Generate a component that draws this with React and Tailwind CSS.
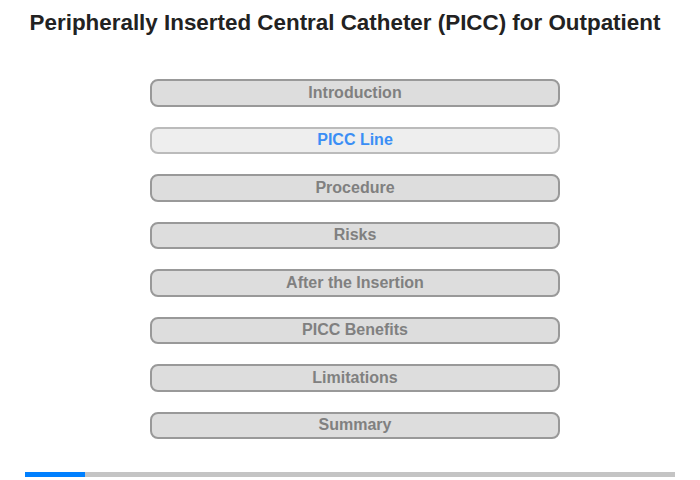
import React from "react";

const items = [
  "Introduction",
  "PICC Line",
  "Procedure",
  "Risks",
  "After the Insertion",
  "PICC Benefits",
  "Limitations",
  "Summary",
];

export default function App() {
  const active = 1;
  return (
    <div className="w-[700px] h-[480px] bg-white font-['Liberation_Sans',Arial,sans-serif] flex flex-col">
      <h1 className="mt-[9px] pr-[10px] text-center text-[22.4px] leading-[28px] font-bold text-[#222]">
        Peripherally Inserted Central Catheter (PICC) for Outpatient
      </h1>
      <div className="mt-[42px] ml-[150px] w-[410px] flex flex-col gap-[20px]">
        {items.map((label, i) => (
          <button
            key={label}
            className={
              i === active
                ? "h-[27.5px] rounded-[8px] border-2 border-[#bbbbbb] bg-[#eeeeee] text-[16px] font-bold text-[#3b8ef5] flex items-center justify-center leading-none"
                : "h-[27.5px] rounded-[8px] border-2 border-[#999999] bg-[#dddddd] text-[16px] font-bold text-[#808080] flex items-center justify-center leading-none"
            }
          >
            {label}
          </button>
        ))}
      </div>
      <div className="mt-auto mb-[3px] ml-[25px] w-[650px] h-[5px] bg-[#c4c4c4] flex">
        <div className="w-[60px] h-full bg-[#0080ff]" />
      </div>
    </div>
  );
}
